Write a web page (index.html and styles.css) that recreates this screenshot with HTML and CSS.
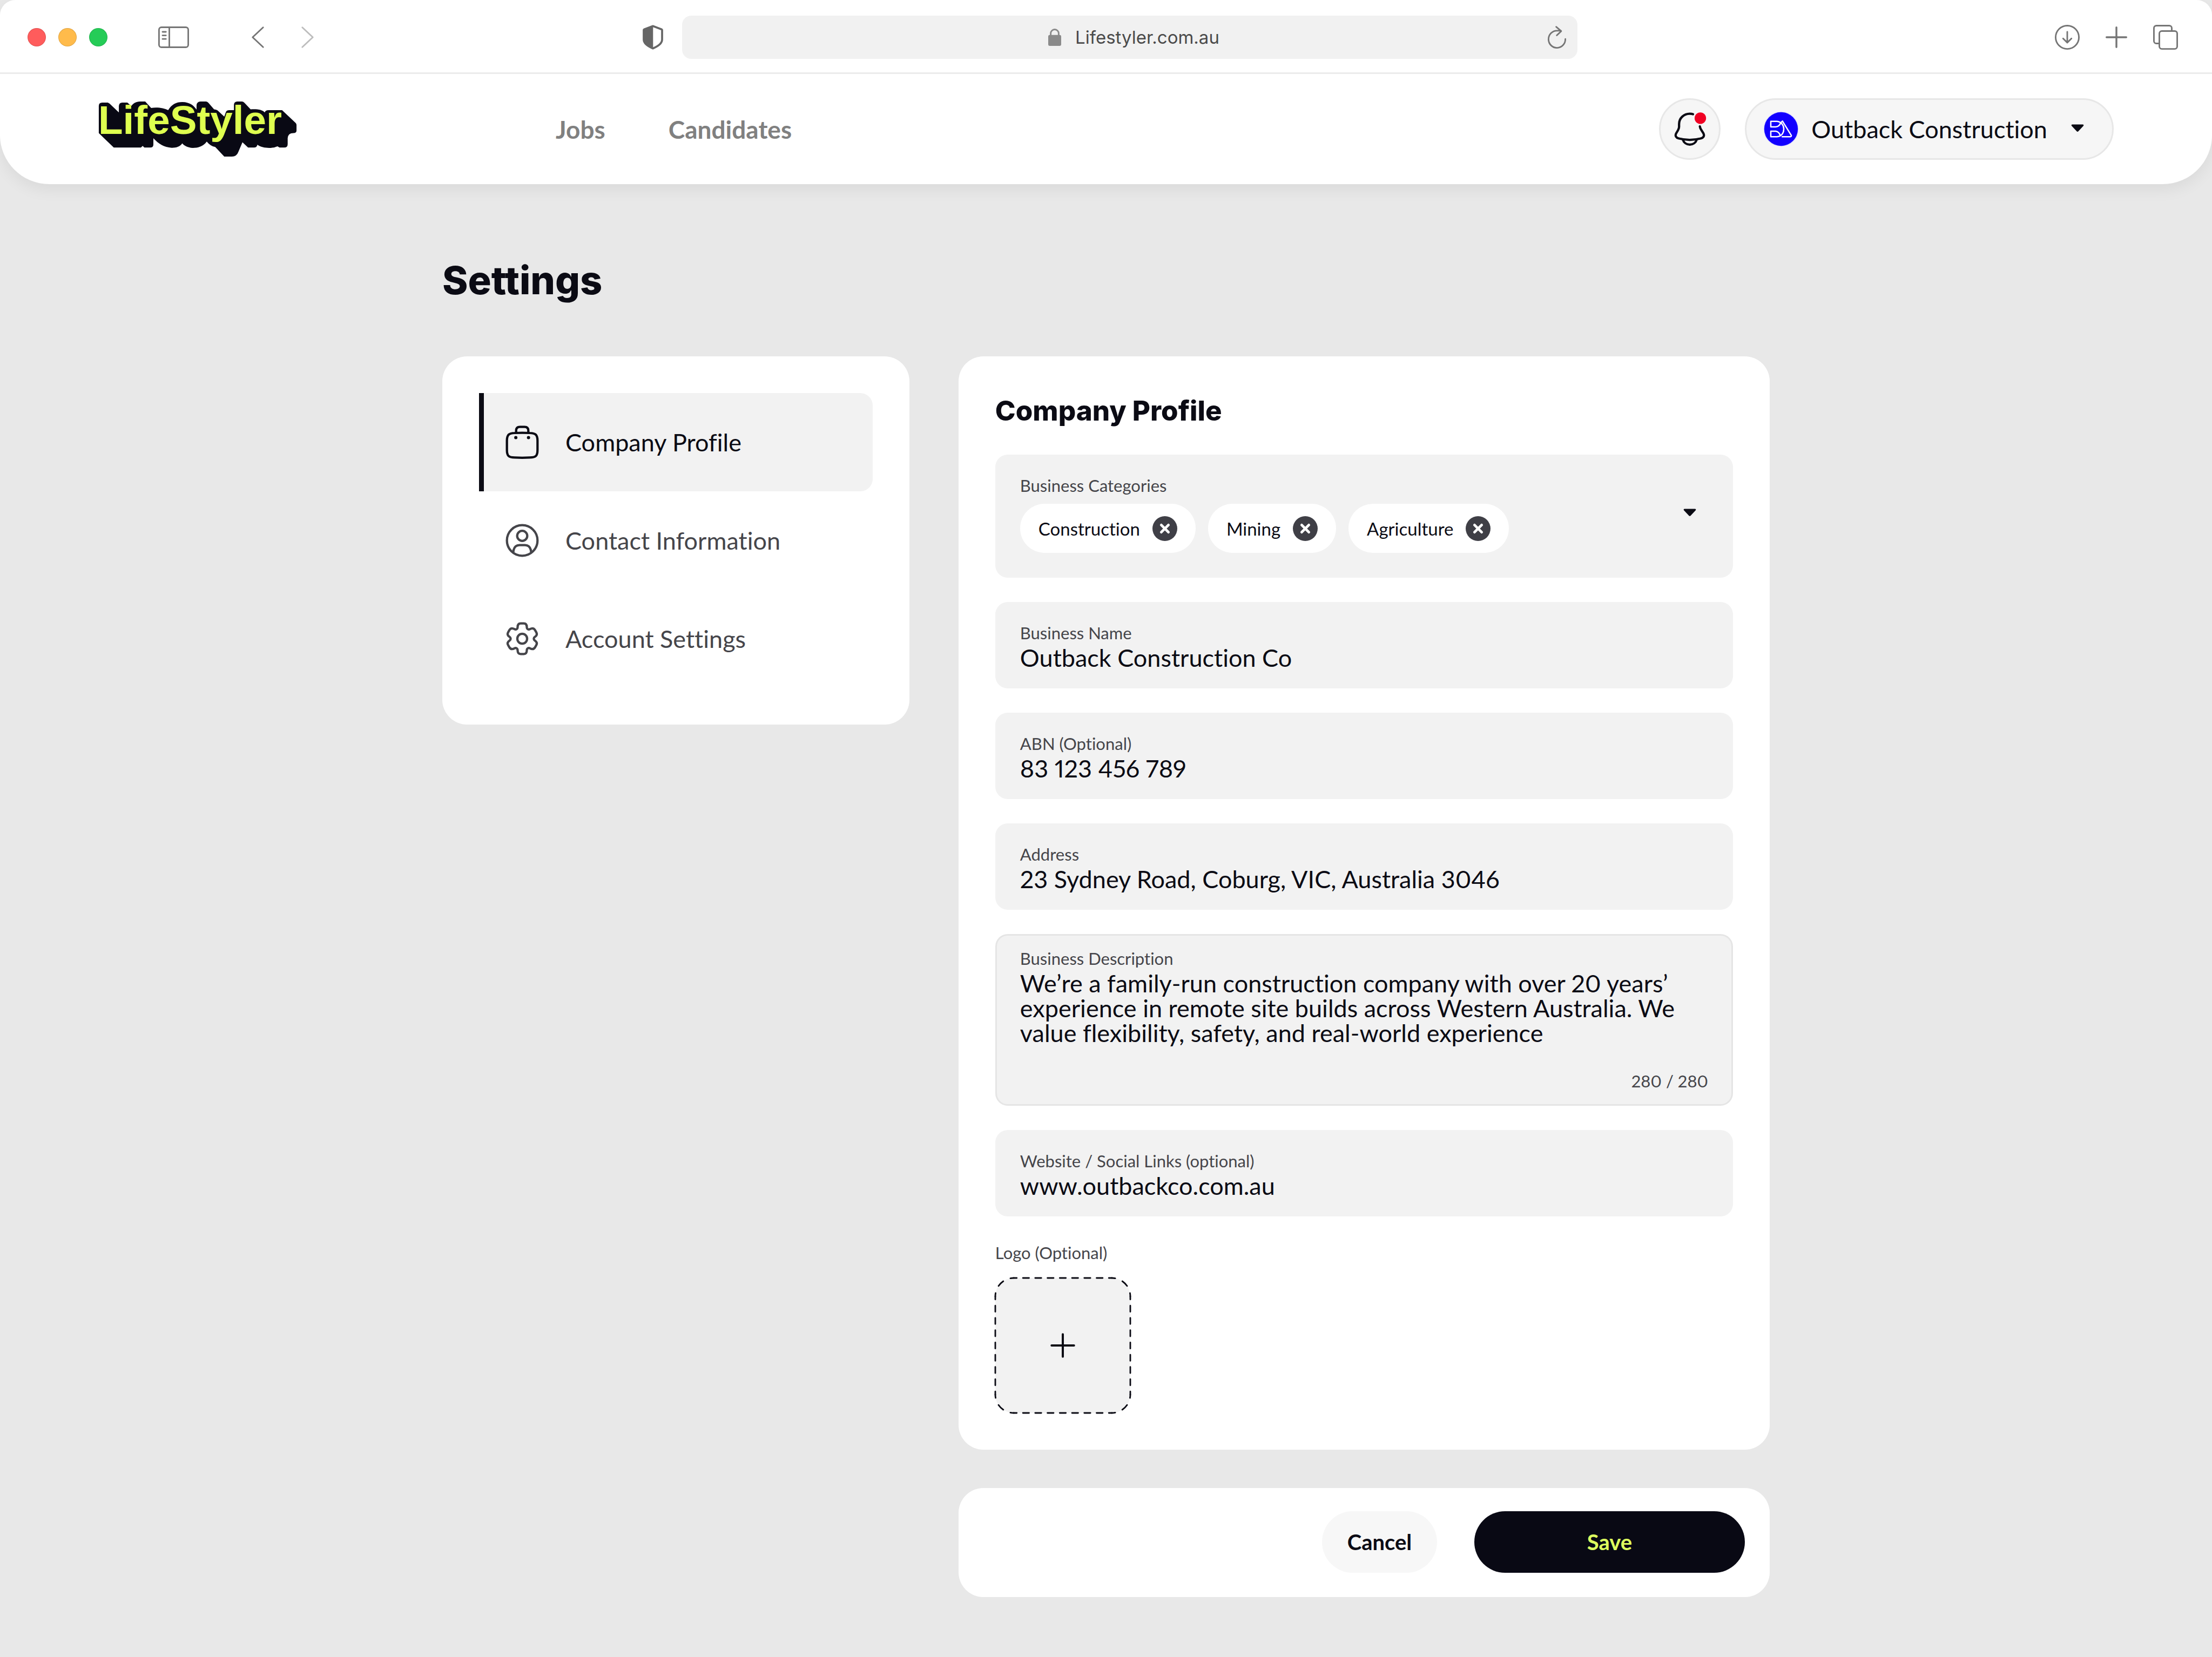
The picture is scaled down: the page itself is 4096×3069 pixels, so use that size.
FILE: index.html
```html
<!DOCTYPE html>
<html lang="en">
<head>
<meta charset="utf-8">
<meta name="viewport" content="width=device-width, initial-scale=1">
<title>Settings – LifeStyler</title>
<link rel="stylesheet" href="styles.css">
</head>
<body>
<div class="top">
  <div class="toolbar">
    <div class="toolbar-left">
      <div class="lights">
        <span class="light light-red"></span>
        <span class="light light-amber"></span>
        <span class="light light-green"></span>
      </div>
      <button class="tool tool-sidebar" type="button" aria-label="Show sidebar">
        <svg width="57" height="40" viewBox="0 0 20 14" fill="none" stroke="#757575"><rect x=".5" y=".5" width="19" height="13" rx="1.6"/><path d="M7.2.5v13"/><path d="M2.8 3.5h2.2M2.8 5.8h2.2M2.8 8.1h2.2" stroke-linecap="round"/></svg>
      </button>
      <button class="tool tool-back" type="button" aria-label="Back">
        <svg width="23" height="40" viewBox="0 0 8 14" fill="none" stroke="#757575" stroke-linecap="round" stroke-linejoin="round"><path d="M7.4.6.6 7l6.8 6.4"/></svg>
      </button>
      <button class="tool" type="button" aria-label="Forward">
        <svg width="23" height="40" viewBox="0 0 8 14" fill="none" stroke="#bdbdbd" stroke-linecap="round" stroke-linejoin="round"><path d="M.6.6 7.4 7 .6 13.4"/></svg>
      </button>
    </div>
    <button class="tool" type="button" aria-label="Privacy report">
      <svg width="38" height="46" viewBox="0 0 13.4 16"><path d="M6.7.7.9 2.9C.7 3 .7 3.1.7 3.3v6.2c0 2.5 2.9 4.5 6 5.8 3.1-1.3 6-3.3 6-5.8V3.3c0-.2 0-.3-.2-.4Z" fill="none" stroke="#666" stroke-width="1.3" stroke-linejoin="round"/><path d="M6.8.7.9 2.9v6.6c0 2.5 2.8 4.5 5.9 5.8Z" fill="#666"/></svg>
    </button>
    <div class="address">
      <span class="address-side"></span>
      <svg class="lock" width="24" height="32" viewBox="0 0 8.3 11"><rect y="4" width="8.3" height="7" rx="1" fill="#8a8a8a"/><path d="M1.6 4.6V3a2.55 2.5 0 0 1 5.1 0v1.6" fill="none" stroke="#8a8a8a"/></svg>
      <input class="address-input" type="text" aria-label="Address" value="Lifestyler.com.au">
      <span class="address-side">
        <button class="tool" type="button" aria-label="Reload">
          <svg width="36" height="42" viewBox="0 0 12.2 14.8" fill="none" stroke="#757575" stroke-linecap="round" stroke-linejoin="round"><path d="M11.6 8.5A5.5 5.6 0 1 1 6.1 3.1H8.7M5.6.6 8.9 3.4 6 6.2"/></svg>
        </button>
      </span>
    </div>
    <div class="toolbar-right">
      <button class="tool" type="button" aria-label="Downloads">
        <svg width="46" height="46" viewBox="0 0 16 16" fill="none" stroke="#757575" stroke-linecap="round" stroke-linejoin="round"><circle cx="8" cy="8" r="7.5"/><path d="M8 4.5v7M5.3 8.8 8 11.5l2.7-2.7"/></svg>
      </button>
      <button class="tool" type="button" aria-label="New tab">
        <svg width="40" height="40" viewBox="0 0 14 14" fill="none" stroke="#757575" stroke-width="1.2" stroke-linecap="round"><path d="M7 .6v12.8M.6 7h12.8"/></svg>
      </button>
      <button class="tool" type="button" aria-label="Tab overview">
        <svg width="46" height="46" viewBox="0 0 16 16" fill="none" stroke="#757575"><rect x="4" y="4" width="11.5" height="11.5" rx="1.6"/><path d="M4 12H2.1A1.6 1.6 0 0 1 .5 10.4V2.1A1.6 1.6 0 0 1 2.1.5H10.4A1.6 1.6 0 0 1 12 2.1V4"/></svg>
      </button>
    </div>
  </div>

  <header class="header">
    <a class="brand" href="#" aria-label="LifeStyler">
      <svg width="368" height="102" viewBox="67 54 1163 324">
        <path fill="#090914" d="M67 80Q67 60 88 60H120L130 66 185 118V80Q187 60 205 60H235L258 80Q278 54 310 54H340L375 92C410 86 450 92 475 105 495 70 525 56 560 57 600 58 625 75 642 102V75Q645 54 665 54H698Q706 54 712 62L745 100Q765 103 770 110L805 143 815 115Q820 105 835 105H862V75Q862 54 882 54H910Q918 54 924 62L960 100C990 97 1030 100 1043 118Q1048 105 1065 105H1145L1225 180Q1230 185 1230 192V225Q1230 240 1212 240 1180 240 1178 270V305Q1178 325 1158 325H1130L1118 318C1085 332 1030 330 1000 308Q997 325 980 325H945L912 294 888 350Q878 378 850 378H805L752 322Q725 318 702 290C680 320 650 327 620 327 590 325 570 315 558 300 545 320 520 327 495 326 450 322 420 305 388 270V308Q388 325 370 325H335L325 315 315 325H155L67 240Z"/>
        <text class="brand-text" x="64" y="245">LifeStyler</text>
      </svg>
    </a>
    <nav class="main-nav" aria-label="Main">
      <a href="#">Jobs</a>
      <a href="#">Candidates</a>
    </nav>
    <div class="account">
      <button class="bell" type="button" aria-label="Notifications">
        <svg width="68" height="68" viewBox="0 0 24 24" fill="none" stroke="#0b0b14" stroke-width="1.5" stroke-linecap="round"><path d="M14.1 2.3C13.4 2.05 12.7 2 12 2 8.1 2 5 4.9 5 8.7V10.6c0 .8-.3 1.5-.7 2.2L3.1 14.8C2.3 16.3 2.9 17.6 4.6 18.1 9.3 19.4 14.6 19.4 19.4 18.1 21.1 17.6 21.7 16.2 20.9 14.8L19.3 12.2C18.9 11.6 18.7 11 18.6 10.3"/><path d="M7.5 19c.6 1.9 2.4 3.2 4.5 3.2s3.9-1.3 4.5-3.2"/><circle cx="18.9" cy="4.9" r="3.75" fill="#f00023" stroke="none"/></svg>
      </button>
      <button class="company" type="button" aria-haspopup="menu">
        <svg width="68" height="68" viewBox="0 0 24 24" fill="none"><circle cx="12" cy="12" r="11.5" fill="#dfe0fb"/><circle cx="12" cy="12" r="11" fill="#1200ff"/><path stroke="#fff" stroke-width=".9" stroke-linejoin="round" d="M8.5 10.6H5.3V7h4c3 .3 4.5 2.6 4.5 5s-1.4 4.8-4.5 5h-4v-3.6h3.2c1.8.3 2.6 1.5 3 3M8.5 10.6c1.7-.2 2.6-1 3.2-2.5L12.9 6.8l5.7 9.2c.3.6 0 1-.6 1H12.4"/></svg>
        <span>Outback Construction</span>
        <svg width="68" height="68" viewBox="0 0 24 24" fill="#0b0b14"><path d="M8.6 9h6.8c.6 0 .8.6.4 1l-3.3 3.5c-.3.3-.7.3-1 0L8.2 10C7.8 9.6 8 9 8.6 9Z"/></svg>
      </button>
    </div>
  </header>
</div>

<main class="page">
  <h1 class="page-title">Settings</h1>
  <div class="columns">
    <nav class="card side" aria-label="Settings">
      <a class="side-item side-item-active" href="#" aria-current="page">
        <svg width="68" height="68" viewBox="0 0 24 24" fill="none" stroke="currentColor" stroke-width="1.5" stroke-linecap="round" stroke-linejoin="round"><path d="M2 11C2 7 3.5 6.1 7 6q5-.3 10 0c3.5.1 5 1 5 5v6c0 4-1.2 5-5 5q-5 .3-10 0c-3.8 0-5-1-5-5ZM8 5.8V4.5C8 2.9 8.7 2 10.5 2h3C15.3 2 16 2.9 16 4.5v1.3"/><path d="M7.8 9h.02M16.1 9h.02" stroke-width="2.1"/></svg>
        <span>Company Profile</span>
      </a>
      <a class="side-item" href="#">
        <svg width="68" height="68" viewBox="0 0 24 24" fill="none" stroke="currentColor" stroke-width="1.5"><circle cx="12" cy="12" r="10"/><circle cx="12" cy="9" r="3.3"/><path d="M6.1 20C6.3 16.8 7.7 15 10.2 15h3.6c2.5 0 3.9 1.8 4.1 5"/></svg>
        <span>Contact Information</span>
      </a>
      <a class="side-item" href="#">
        <svg width="68" height="68" viewBox="0 0 24 24" fill="none" stroke="currentColor" stroke-width="1.5" stroke-linejoin="round"><circle cx="12" cy="12" r="3.2"/><path d="M9 4.4C9 2.8 9.6 2 11 2h2c1.4 0 2 .8 2 2.4 0 1.2 1 1.9 2.1 1.3 1.5-.8 2.6-.5 3.3.7l.8 1.4c.7 1.2.3 2.2-.9 3-1 .7-1 1.7 0 2.4 1.2.8 1.6 1.8.9 3l-.8 1.4c-.7 1.2-1.8 1.5-3.3.7-1.1-.6-2.1.1-2.1 1.3 0 1.6-.6 2.4-2 2.4h-2c-1.4 0-2-.8-2-2.4 0-1.2-1-1.9-2.1-1.3-1.5.8-2.6.5-3.3-.7l-.8-1.4c-.7-1.2-.3-2.2.9-3 1-.7 1-1.7 0-2.4-1.2-.8-1.6-1.8-.9-3l.8-1.4c.7-1.2 1.8-1.5 3.3-.7C8 6.3 9 5.6 9 4.4Z"/></svg>
        <span>Account Settings</span>
      </a>
    </nav>

    <form class="forms">
      <section class="card profile">
        <h2 class="card-title">Company Profile</h2>
        <div class="fields">
          <div class="field field-categories" role="group" aria-labelledby="categories-label">
            <div class="categories">
              <span class="label" id="categories-label">Business Categories</span>
              <div class="chips">
                <span class="chip">Construction
                  <button class="chip-remove" type="button" aria-label="Remove Construction"><svg width="46" height="46" viewBox="0 0 16 16"><circle cx="8" cy="8" r="8" fill="#3f3f46"/><path d="m5.7 5.7 4.6 4.6m0-4.6-4.6 4.6" stroke="#fff" stroke-width="1.7" stroke-linecap="round"/></svg></button>
                </span>
                <span class="chip">Mining
                  <button class="chip-remove" type="button" aria-label="Remove Mining"><svg width="46" height="46" viewBox="0 0 16 16"><circle cx="8" cy="8" r="8" fill="#3f3f46"/><path d="m5.7 5.7 4.6 4.6m0-4.6-4.6 4.6" stroke="#fff" stroke-width="1.7" stroke-linecap="round"/></svg></button>
                </span>
                <span class="chip">Agriculture
                  <button class="chip-remove" type="button" aria-label="Remove Agriculture"><svg width="46" height="46" viewBox="0 0 16 16"><circle cx="8" cy="8" r="8" fill="#3f3f46"/><path d="m5.7 5.7 4.6 4.6m0-4.6-4.6 4.6" stroke="#fff" stroke-width="1.7" stroke-linecap="round"/></svg></button>
                </span>
              </div>
            </div>
            <button class="tool" type="button" aria-label="Choose categories">
              <svg width="68" height="68" viewBox="0 0 24 24" fill="#0b0b14"><path d="M8.6 7.2h6.8c.6 0 .8.6.4 1l-3.3 3.5c-.3.3-.7.3-1 0L8.2 8.2C7.8 7.8 8 7.2 8.6 7.2Z"/></svg>
            </button>
          </div>
          <div class="field">
            <label class="label" for="name">Business Name</label>
            <input class="value" id="name" type="text" value="Outback Construction Co">
          </div>
          <div class="field">
            <label class="label" for="abn">ABN (Optional)</label>
            <input class="value" id="abn" type="text" value="83 123 456 789">
          </div>
          <div class="field">
            <label class="label" for="address">Address</label>
            <input class="value" id="address" type="text" value="23 Sydney Road, Coburg, VIC, Australia 3046">
          </div>
          <div class="field field-description">
            <label class="label" for="description">Business Description</label>
            <textarea class="value value-long" id="description">We’re a family-run construction company with over 20 years’ experience in remote site builds across Western Australia. We value flexibility, safety, and real-world experience</textarea>
            <span class="counter">280 / 280</span>
          </div>
          <div class="field">
            <label class="label" for="website">Website / Social Links (optional)</label>
            <input class="value" id="website" type="text" value="www.outbackco.com.au">
          </div>
        </div>
        <div class="logo-field">
          <span class="label" id="logo-label">Logo (Optional)</span>
          <button class="upload" type="button" aria-labelledby="logo-label">
            <svg class="upload-frame" width="250" height="250" viewBox="0 0 88 88" fill="none" stroke="#0b0b14" stroke-linecap="round">
              <rect width="88" height="88" rx="12" fill="#f2f2f2" stroke="none"/>
              <path stroke-dasharray="4 4" stroke-dashoffset="2" d="M12 0H76M88 12V76M76 88H12M0 76V12"/>
              <path stroke-dasharray="4.4 5.02" stroke-dashoffset="2.2" d="M76 0A12 12 0 0 1 88 12M88 76A12 12 0 0 1 76 88M12 88A12 12 0 0 1 0 76M0 12A12 12 0 0 1 12 0"/>
              <path stroke-width="1.4" d="M44 36.7v14.6M36.7 44h14.6"/>
            </svg>
          </button>
        </div>
      </section>
      <section class="card actions">
        <button class="button button-cancel" type="button">Cancel</button>
        <button class="button button-save" type="submit">Save</button>
      </section>
    </form>
  </div>
</main>
</body>
</html>
```
FILE: styles.css
```css
*, *::before, *::after { box-sizing: border-box; }

body {
  margin: 0;
  background: #e8e8e8;
  color: #0b0b14;
  font-family: Lato, "Noto Sans", sans-serif;
  font-size: 45px;
  font-variant-ligatures: none;
}

a { color: inherit; text-decoration: none; }
button, input, textarea { font: inherit; font-variant-ligatures: none; color: inherit; }
button { border: 0; padding: 0; background: none; cursor: pointer; }
svg { display: block; flex: none; overflow: visible; }

/* Window chrome and site header */
.top {
  background: #fff;
  border-radius: 28px 28px 91px 91px;
  box-shadow: 0 11px 28px rgba(0, 0, 0, 0.06);
}

.toolbar {
  display: flex;
  align-items: center;
  height: 137px;
  padding: 3px 63px 0 51px;
  border-bottom: 3px solid #ebebeb;
}
.toolbar-left { flex: 1139 1 0; display: flex; align-items: center; }
.toolbar-right { flex: 1112 1 0; display: flex; align-items: center; justify-content: flex-end; gap: 48px; }
.lights { display: flex; gap: 23px; }
.light { width: 34px; height: 34px; border-radius: 50%; border: 1px solid rgba(0, 0, 0, 0.12); }
.light-red { background: #ff5c5c; }
.light-amber { background: #ffbb4b; }
.light-green { background: #25cc57; }
.tool-sidebar { margin-left: 94px; }
.tool-back { margin: 0 69px 0 116px; }

.address {
  flex: 0 1 1658px;
  display: flex;
  align-items: center;
  height: 80px;
  margin-left: 35px;
  padding: 0 20px 0 52px;
  border-radius: 17px;
  background: #f1f1f1;
}
.address-side { flex: 1; display: flex; justify-content: flex-end; }
.lock { margin-right: 26px; }
.address-input {
  width: 284px;
  border: 0;
  padding: 0;
  background: none;
  color: #4a4a4a;
  font-family: Inter, sans-serif;
  font-size: 33px;
}

.header { display: flex; align-items: center; height: 204px; padding: 0 182px; }
.brand-text { font: bold 237px "Liberation Sans", Arial, sans-serif; fill: #deff4f; }
.main-nav { display: flex; gap: 117px; margin-left: 479px; color: #808080; font-size: 46px; font-weight: 700; }
.account { display: flex; gap: 45px; margin-left: auto; }
.bell, .company { display: flex; align-items: center; height: 114px; border: 3px solid #e7e7e7; border-radius: 57px; background: #f6f6f6; }
.bell { justify-content: center; width: 114px; }
.company { gap: 22px; padding: 0 30px; }

/* Settings page */
.page { max-width: 2458px; margin: 0 auto; padding: 135px 0 111px; }
.page-title { margin: 0 0 98px; font: 800 72px/86px Inter, sans-serif; }
.columns { display: grid; grid-template-columns: 304fr 528fr; gap: 91px; align-items: start; }
.card { border-radius: 46px; background: #fff; }

.side { padding: 68px; }
.side-item {
  display: flex;
  align-items: center;
  gap: 46px;
  height: 182px;
  padding-left: 37px;
  border-left: 9px solid transparent;
  color: #45454a;
}
.side-item-active { border-left-color: #0b0b14; border-radius: 0 23px 23px 0; background: #f2f2f2; color: #0b0b14; }

.forms { display: grid; gap: 71px; }
.profile { padding: 67px 68px 68px; }
.card-title { margin: 0 0 47px; font: 800 51px/68px Inter, sans-serif; }
.fields { display: grid; gap: 45px; }
.field { display: flex; flex-direction: column; padding: 40px 46px 30px; border-radius: 23px; background: #f2f2f2; }
.label { color: #45454a; font-size: 31px; line-height: 34px; }
.value {
  width: 100%;
  height: 54px;
  margin: 2px 0 0;
  border: 0;
  padding: 0;
  background: none;
  line-height: 54px;
  font-variant-numeric: proportional-nums;
}

.field-categories { flex-direction: row; align-items: center; justify-content: space-between; padding: 40px 46px 46px; }
.field-categories > .tool { margin-top: 6px; }
.categories { display: grid; gap: 17px; }
.chips { display: flex; flex-wrap: wrap; gap: 23px; }
.chip { display: flex; align-items: center; gap: 23px; height: 91px; padding: 0 34px; border-radius: 46px; background: #fff; font-size: 33px; }

.field-description { padding: 25px 43px 24px; border: 3px solid #e5e5e5; }
.value-long { display: block; height: 185px; margin-top: 6px; line-height: 46px; resize: none; overflow: hidden; }
.counter { align-self: flex-end; color: #45454a; font-size: 31px; line-height: 38px; font-variant-numeric: proportional-nums; }

.logo-field { display: grid; justify-items: start; gap: 30px; margin-top: 50px; }

.actions { display: flex; justify-content: flex-end; gap: 69px; padding: 43px 46px 45px; }
.button { height: 114px; border-radius: 57px; font-size: 40px; font-weight: 700; }
.button-cancel { width: 213px; background: #f7f7f7; }
.button-save { width: 501px; background: #090914; color: #deff5f; }
```
